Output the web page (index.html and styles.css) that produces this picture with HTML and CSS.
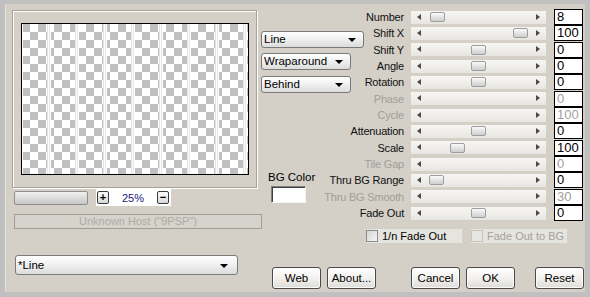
FILE: index.html
```html
<!DOCTYPE html>
<html>
<head>
<meta charset="utf-8">
<link rel="stylesheet" href="styles.css">
</head>
<body>
<div class="window">
  <div class="left">
    <div class="preview"><div class="canvas"></div></div>
    <div class="zoom-row">
      <div class="zoom-bar"></div>
      <div class="zoom-ctl">
        <span class="mini-btn">+</span>
        <span class="zoom-val">25%</span>
        <span class="mini-btn">&minus;</span>
      </div>
    </div>
    <div class="host">Unknown Host ("9PSP")</div>
    <div class="select preset">*Line<span class="caret"></span></div>
  </div>
  <div class="right">
    <div class="top">
      <div class="mid">
        <div class="select sel-line">Line<span class="caret"></span></div>
        <div class="select sel-wrap">Wraparound<span class="caret"></span></div>
        <div class="select sel-behind">Behind<span class="caret"></span></div>
        <div class="bg-label">BG Color</div>
        <div class="bg-swatch"></div>
      </div>
      <div class="sliders">
        <div class="row"><span class="lbl">Number</span><div class="track"><i class="arr l"></i><i class="thumb" style="left:19px"></i><i class="arr r"></i></div><div class="num">8</div></div>
        <div class="row"><span class="lbl">Shift X</span><div class="track"><i class="arr l"></i><i class="thumb" style="left:102px"></i><i class="arr r"></i></div><div class="num">100</div></div>
        <div class="row"><span class="lbl">Shift Y</span><div class="track"><i class="arr l"></i><i class="thumb" style="left:60px"></i><i class="arr r"></i></div><div class="num">0</div></div>
        <div class="row"><span class="lbl">Angle</span><div class="track"><i class="arr l"></i><i class="thumb" style="left:60px"></i><i class="arr r"></i></div><div class="num">0</div></div>
        <div class="row"><span class="lbl">Rotation</span><div class="track"><i class="arr l"></i><i class="thumb" style="left:60px"></i><i class="arr r"></i></div><div class="num">0</div></div>
        <div class="row off"><span class="lbl">Phase</span><div class="track"><i class="arr l"></i><i class="arr r"></i></div><div class="num">0</div></div>
        <div class="row off"><span class="lbl">Cycle</span><div class="track"><i class="arr l"></i><i class="arr r"></i></div><div class="num">100</div></div>
        <div class="row"><span class="lbl">Attenuation</span><div class="track"><i class="arr l"></i><i class="thumb" style="left:60px"></i><i class="arr r"></i></div><div class="num">0</div></div>
        <div class="row"><span class="lbl">Scale</span><div class="track"><i class="arr l"></i><i class="thumb" style="left:39px"></i><i class="arr r"></i></div><div class="num">100</div></div>
        <div class="row off"><span class="lbl">Tile Gap</span><div class="track"><i class="arr l"></i><i class="arr r"></i></div><div class="num">0</div></div>
        <div class="row"><span class="lbl">Thru BG Range</span><div class="track"><i class="arr l"></i><i class="thumb" style="left:18px"></i><i class="arr r"></i></div><div class="num">0</div></div>
        <div class="row off"><span class="lbl">Thru BG Smooth</span><div class="track"><i class="arr l"></i><i class="arr r"></i></div><div class="num">30</div></div>
        <div class="row"><span class="lbl">Fade Out</span><div class="track"><i class="arr l"></i><i class="thumb" style="left:60px"></i><i class="arr r"></i></div><div class="num">0</div></div>
      </div>
    </div>
    <div class="checks">
      <div class="check"><span class="box"></span><span class="ctext">1/n Fade Out</span></div>
      <div class="check off"><span class="box"></span><span class="ctext">Fade Out to BG</span></div>
    </div>
    <div class="buttons">
      <span class="btn">Web</span>
      <span class="btn gap-s">About...</span>
      <span class="btn gap-l">Cancel</span>
      <span class="btn gap-s2">OK</span>
      <span class="btn gap-m">Reset</span>
    </div>
  </div>
</div>
</body>
</html>
```

FILE: styles.css
```css
* { box-sizing: border-box; }
html, body { margin: 0; padding: 0; }
body {
  width: 590px;
  height: 297px;
  background: #c0c0c0;
  font-family: "Liberation Sans", Arial, sans-serif;
  font-size: 11px;
  color: #000;
  overflow: hidden;
}
.window {
  margin: 4px 5px 5px 5px;
  width: 580px;
  height: 288px;
  background: #d4d0c8;
  border-left: 1px solid #e6e4df;
  display: flex;
}
.left {
  width: 255px;
  padding: 6px 0 0 6px;
  flex: none;
}
.preview {
  width: 245px;
  height: 178px;
  border: 1px solid #a6a299;
  box-shadow: inset 1px 1px 0 #fff, 1px 1px 0 #fff;
  padding: 12px 0 0 8px;
}
.canvas {
  width: 228px;
  height: 152px;
  border: 1px solid #000;
  background:
    repeating-linear-gradient(90deg, #e4e4e4 0 1px, #fbfbfb 1px 2px, #e8e8e8 2px 3px, #fdfdfd 3px 4px, transparent 4px 28px) 25px 0 / 28px 100%,
    repeating-conic-gradient(#fff 0 25%, #c0c0c0 0 50%) 0 0 / 16px 16px;
}
.zoom-row {
  display: flex;
  align-items: center;
  margin-top: 1px;
  height: 17px;
}
.zoom-bar {
  margin-left: 2px;
  width: 74px;
  height: 14px;
  border: 1px solid #8e8e8e;
  border-radius: 2px;
  background: linear-gradient(#f0f0f0, #d8d8d8 60%, #c8c8c8);
}
.zoom-ctl {
  margin-left: 8px;
  width: 75px;
  height: 17px;
  background: #fff;
  display: flex;
  align-items: center;
  justify-content: space-between;
  padding: 0 2px 0 1px;
}
.mini-btn {
  width: 12px;
  height: 13px;
  border: 1px solid #3a3a3a;
  border-radius: 2px;
  background: linear-gradient(#fdfdfd, #d8d8d8);
  font-weight: bold;
  font-size: 11px;
  line-height: 10px;
  text-align: center;
}
.zoom-val {
  color: #1a1a80;
  font-size: 11px;
}
.host {
  margin: 8px 0 0 2px;
  width: 248px;
  height: 15px;
  border: 1px solid #a09d96;
  color: #aeaba4;
  text-align: center;
  line-height: 13px;
  background: #d6d3cc;
}
.select {
  position: relative;
  height: 17px;
  border: 1px solid #7a7a7a;
  border-radius: 3px;
  background: linear-gradient(#ffffff, #f3f3f3 40%, #dcdcdc);
  padding-left: 2px;
  line-height: 15px;
  font-size: 11.5px;
  white-space: nowrap;
}
.caret {
  position: absolute;
  right: 7px;
  top: 6px;
  width: 0;
  height: 0;
  border-left: 4px solid transparent;
  border-right: 4px solid transparent;
  border-top: 4px solid #000;
}
.preset {
  margin: 26px 0 0 3px;
  width: 223px;
  height: 20px;
  line-height: 18px;
}
.preset .caret { top: 8px; right: 9px; }
.right {
  flex: 1;
  padding-top: 5px;
}
.top { display: flex; }
.mid {
  width: 62px;
  flex: none;
  display: flex;
  flex-direction: column;
}
.sel-line { margin-top: 22px; width: 103px; }
.sel-wrap { margin-top: 5px; width: 90px; }
.sel-behind { margin-top: 6px; width: 90px; }
.bg-label {
  margin: 78px 0 0 7px;
  width: 50px;
  white-space: nowrap;
  font-size: 11.5px;
  line-height: 13px;
}
.bg-swatch {
  margin: 2px 0 0 10px;
  width: 35px;
  height: 17px;
  background: #fff;
  border-top: 1px solid #808080;
  border-left: 1px solid #808080;
  border-right: 1px solid #f4f4f4;
  border-bottom: 1px solid #f4f4f4;
  box-shadow: inset 1px 1px 0 #404040;
}
.sliders {
  display: flex;
  flex-direction: column;
}
.row {
  display: flex;
  align-items: center;
  height: 16.33px;
}
.lbl {
  width: 81px;
  text-align: right;
  white-space: nowrap;
  letter-spacing: -0.2px;
  color: #111;
}
.off .lbl { color: #a19e97; }
.track {
  position: relative;
  margin-left: 7px;
  width: 135px;
  height: 13px;
  background: linear-gradient(#f6f5f2, #eeede9 60%, #e6e5e0);
}
.arr {
  position: absolute;
  top: 3px;
  width: 0;
  height: 0;
  border-top: 3.5px solid transparent;
  border-bottom: 3.5px solid transparent;
}
.arr.l { left: 6px; border-right: 4px solid #4a4a4a; }
.arr.r { right: 6px; border-left: 4px solid #4a4a4a; }
.thumb {
  position: absolute;
  top: 1.5px;
  width: 15px;
  height: 10px;
  border: 1px solid #9d9d9d;
  border-radius: 2px;
  background: linear-gradient(#fbfbfb, #e4e4e4 50%, #cfcfcf);
}
.num {
  margin-left: 8px;
  width: 29px;
  height: 16px;
  border: 1px solid #000;
  background: #fff;
  font-size: 13px;
  line-height: 14px;
  padding-left: 2px;
}
.off .num { color: #a3a09a; }
.checks {
  display: flex;
  margin-top: 8px;
  padding-left: 105px;
  height: 14px;
}
.check {
  display: flex;
  align-items: center;
  width: 96px;
  height: 14px;
  background: #e6e4df;
}
.check + .check { margin-left: 9px; }
.box {
  width: 12px;
  height: 12px;
  border: 1px solid #8c8c8c;
  background: linear-gradient(135deg, #d4d4d4, #f4f4f4);
}
.off .box { border-color: #c6c3bc; background: #e8e6e1; }
.ctext { margin-left: 4px; white-space: nowrap; }
.off .ctext { color: #a4a19a; }
.buttons {
  display: flex;
  margin-top: 24px;
  padding-left: 11px;
}
.btn {
  width: 49px;
  height: 22px;
  border: 1px solid #4a4a4a;
  border-radius: 3px;
  background: linear-gradient(#ffffff, #f2f1ee 50%, #dedcd6);
  box-shadow: inset 0 0 0 1px #fbfbfb;
  text-align: center;
  line-height: 20px;
  font-size: 11.5px;
}
.gap-s { margin-left: 6px; }
.gap-l { margin-left: 35px; }
.gap-s2 { margin-left: 6px; }
.gap-m { margin-left: 20px; }
```
